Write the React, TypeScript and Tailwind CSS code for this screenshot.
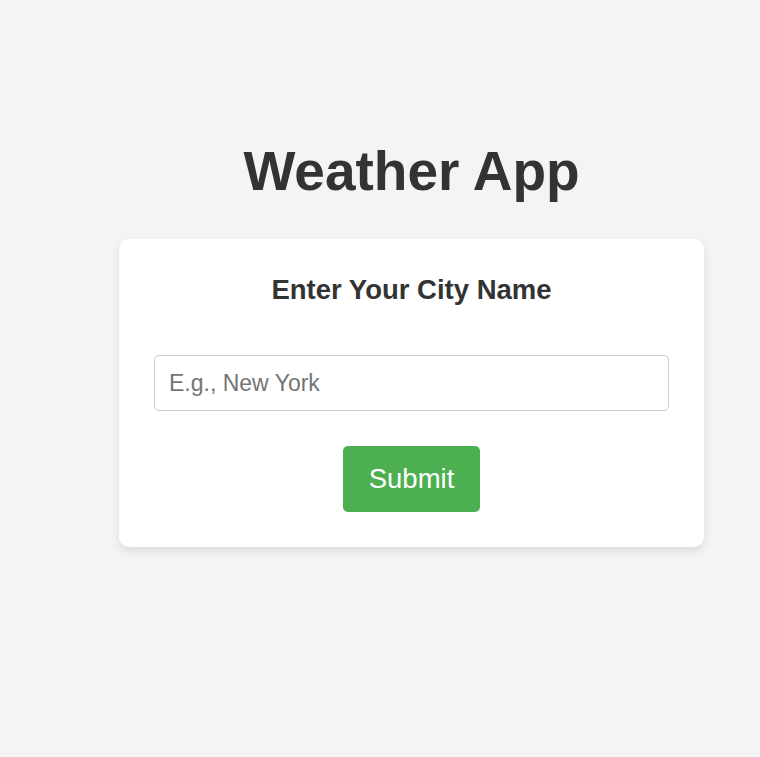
export default function App() {
  return (
    <div className="min-h-[757px] bg-[#f4f4f4] flex flex-col items-center pl-[63px] pt-[139px] font-['Liberation_Sans',Arial,sans-serif] text-[#333]">
      <h1 className="text-[55px] font-bold leading-[64px]">Weather App</h1>

      <div className="mt-[36px] w-[585px] bg-white rounded-[10px] shadow-[0_4px_10px_rgba(0,0,0,0.1)] p-[35px] flex flex-col items-center">
        <h2 className="text-[27.5px] font-bold leading-[31px]">Enter Your City Name</h2>

        <input
          type="text"
          placeholder="E.g., New York"
          className="mt-[50px] w-full h-[56px] border border-[#ccc] rounded-[5px] px-[14px] text-[23px] placeholder:text-[#757575] outline-none"
        />

        <button className="mt-[35px] h-[66px] px-[26px] bg-[#4caf50] text-white text-[27.5px] rounded-[5px]">
          Submit
        </button>
      </div>
    </div>
  );
}
